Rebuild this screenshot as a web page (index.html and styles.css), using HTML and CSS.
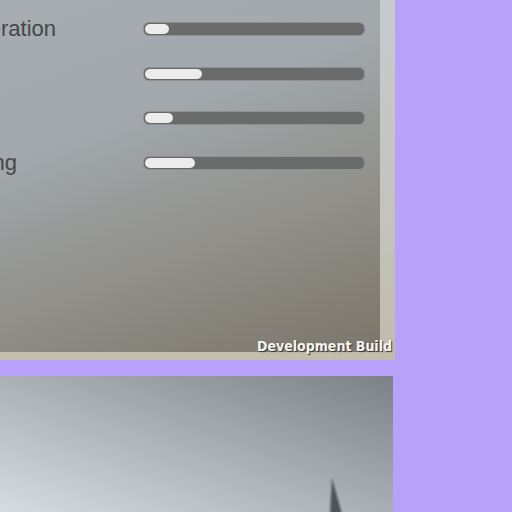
FILE: index.html
```html
<!DOCTYPE html>
<html>
<head>
<meta charset="utf-8">
<link rel="stylesheet" href="styles.css">
</head>
<body>
<div class="page">
  <section class="settings">
    <div class="inner">
      <div class="row"><span class="label">Acceleration</span><div class="track"><div class="fill" style="width:24px"></div></div></div>
      <div class="row"><span class="label">Mass</span><div class="track"><div class="fill" style="width:57px"></div></div></div>
      <div class="row"><span class="label">Drag</span><div class="track"><div class="fill" style="width:28px"></div></div></div>
      <div class="row"><span class="label">Steering</span><div class="track"><div class="fill" style="width:50px"></div></div></div>
    </div>
    <span class="devbuild">Development Build</span>
  </section>
  <section class="scene">
    <svg class="spike" width="20" height="40" viewBox="0 0 20 40"><polygon points="6,4 4,40 16,40" fill="#4f5357"/></svg>
  </section>
</div>
</body>
</html>
```
FILE: styles.css
```css
html, body {
  margin: 0;
  padding: 0;
  background: #b8a2f9;
  overflow: hidden;
  width: 512px;
  height: 512px;
}
.page {
  display: flex;
  flex-direction: column;
  gap: 16px;
}
.settings {
  position: relative;
  width: 395px;
  height: 360px;
  box-sizing: border-box;
  border-right: 15px solid #c4c7c6;
  border-bottom: 8px solid #c3bdab;
  background: linear-gradient(160deg, #a7adb1 0%, #a1a7aa 35%, #8e8c86 70%, #7b766a 100%);
  font-family: "Liberation Sans", Arial, sans-serif;
}
.settings::after {
  content: "";
  position: absolute;
  top: 0;
  right: -15px;
  width: 15px;
  height: 360px;
  background: linear-gradient(180deg, #c6cbcc 0%, #c4c5c1 50%, #c1bba9 100%);
}
.inner {
  display: flex;
  flex-direction: column;
  padding-top: 7px;
  margin-left: -65px;
}
.row {
  display: grid;
  grid-template-columns: 208px 222px;
  align-items: center;
  height: 44.5px;
}
.label {
  font-size: 22px;
  color: #43484b;
  line-height: 1;
  white-space: nowrap;
}
.track {
  height: 10px;
  border-radius: 6px;
  background: #6a6b6b;
  border: 1px solid #8e9091;
  padding: 1px;
  display: flex;
}
.fill {
  height: 10px;
  border-radius: 5px;
  background: #ececea;
  box-shadow: 0 0 1px #555;
}
.devbuild {
  position: absolute;
  right: -12px;
  bottom: -2px;
  z-index: 1;
  font-family: "DejaVu Sans Condensed", "DejaVu Sans", sans-serif;
  font-weight: bold;
  font-size: 14px;
  color: #f4f4f2;
  text-shadow: 1px 1px 1px #333;
  line-height: 16px;
}
.scene {
  position: relative;
  width: 393px;
  height: 136px;
  background: linear-gradient(200deg, #7c8186 0%, #a5abaf 45%, #d6dce1 100%);
}
.spike {
  position: absolute;
  left: 326px;
  top: 98px;
  filter: blur(0.8px);
}
```
